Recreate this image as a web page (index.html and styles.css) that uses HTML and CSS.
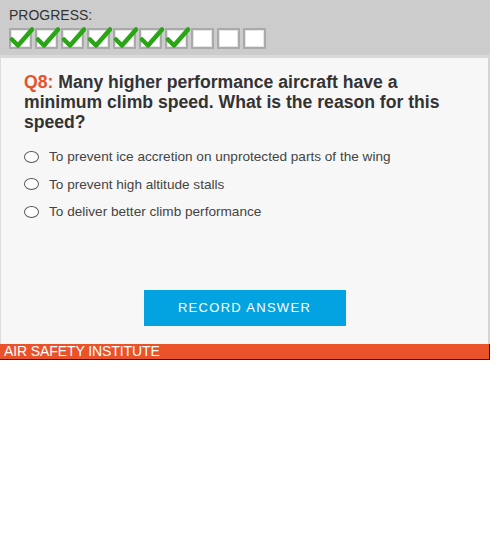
FILE: index.html
```html
<!DOCTYPE html>
<html lang="en">
<head>
    <meta charset="UTF-8">
    <meta name="viewport" content="width=device-width, initial-scale=1.0">
    <title>Quiz</title>
    <link rel="stylesheet" href="styles.css">
</head>
<body>
    <div class="quiz">
        <div class="header">
            <div class="progress-label">PROGRESS:</div>
            <div class="progress">
                <span class="box done"><svg viewBox="0 0 24 20"><path d="M2 11 L8 17 L22 1" /></svg></span>
                <span class="box done"><svg viewBox="0 0 24 20"><path d="M2 11 L8 17 L22 1" /></svg></span>
                <span class="box done"><svg viewBox="0 0 24 20"><path d="M2 11 L8 17 L22 1" /></svg></span>
                <span class="box done"><svg viewBox="0 0 24 20"><path d="M2 11 L8 17 L22 1" /></svg></span>
                <span class="box done"><svg viewBox="0 0 24 20"><path d="M2 11 L8 17 L22 1" /></svg></span>
                <span class="box done"><svg viewBox="0 0 24 20"><path d="M2 11 L8 17 L22 1" /></svg></span>
                <span class="box done"><svg viewBox="0 0 24 20"><path d="M2 11 L8 17 L22 1" /></svg></span>
                <span class="box"></span>
                <span class="box"></span>
                <span class="box"></span>
            </div>
        </div>
        <div class="content">
            <h2 class="question"><span class="qnum">Q8:</span> Many higher performance aircraft have a minimum climb speed. What is the reason for this speed?</h2>
            <ul class="options">
                <li><span class="radio"></span>To prevent ice accretion on unprotected parts of the wing</li>
                <li><span class="radio"></span>To prevent high altitude stalls</li>
                <li><span class="radio"></span>To deliver better climb performance</li>
            </ul>
            <div class="actions">
                <button class="record">RECORD ANSWER</button>
            </div>
        </div>
        <div class="footer">AIR SAFETY INSTITUTE</div>
    </div>
</body>
</html>
```

FILE: styles.css
```css
body {
    margin: 0;
    padding: 0;
    font-family: "Liberation Sans", Arial, sans-serif;
    background-color: white;
}

.quiz {
    width: 490px;
}

.header {
    background-color: #cccccc;
    padding: 7px 9px 5px 9px;
    height: 43px;
    border-bottom: 3px solid #d9d9d9;
}

.progress-label {
    font-size: 14px;
    color: #333;
    line-height: 16px;
}

.progress {
    display: flex;
    gap: 3px;
    margin-top: 5px;
}

.box {
    position: relative;
    width: 19px;
    height: 17px;
    background-color: white;
    border: 2px solid #aaaaaa;
    box-shadow: inset 0 0 0 1px #e6e6e6;
}

.box svg {
    position: absolute;
    left: -1px;
    top: -2px;
    width: 24px;
    height: 21px;
    overflow: visible;
}

.box path {
    fill: none;
    stroke: #2aa515;
    stroke-width: 4.5;
    stroke-linecap: round;
    stroke-linejoin: round;
}

.content {
    background-color: #f7f7f7;
    border-left: 1px solid #dddddd;
    border-right: 2px solid #d4d4d4;
    height: 286px;
    padding: 14px 24px 0 23px;
    box-sizing: border-box;
}

.question {
    margin: 0;
    font-size: 17.6px;
    line-height: 20px;
    font-weight: bold;
    color: #333;
}

.qnum {
    color: #e5532b;
}

.options {
    list-style: none;
    margin: 11px 0 0 0;
    padding: 0;
}

.options li {
    display: flex;
    align-items: center;
    height: 27.5px;
    font-size: 13.6px;
    color: #444;
}

.radio {
    width: 13px;
    height: 10px;
    border: 1.5px solid #555;
    border-radius: 50%;
    background-color: white;
    margin-right: 10px;
}

.actions {
    display: flex;
    justify-content: center;
    margin-top: 64px;
}

.record {
    width: 202px;
    height: 36px;
    background-color: #03a2e0;
    color: white;
    border: none;
    font-family: "Liberation Sans", Arial, sans-serif;
    font-size: 13px;
    letter-spacing: 1.3px;
    margin-left: 1px;
}

.footer {
    background-color: #ea5329;
    color: white;
    font-size: 14px;
    line-height: 15px;
    height: 15px;
    padding-left: 4px;
    border-right: 1px solid #222;
    border-bottom: 1px solid #222;
    letter-spacing: -0.1px;
}
```
